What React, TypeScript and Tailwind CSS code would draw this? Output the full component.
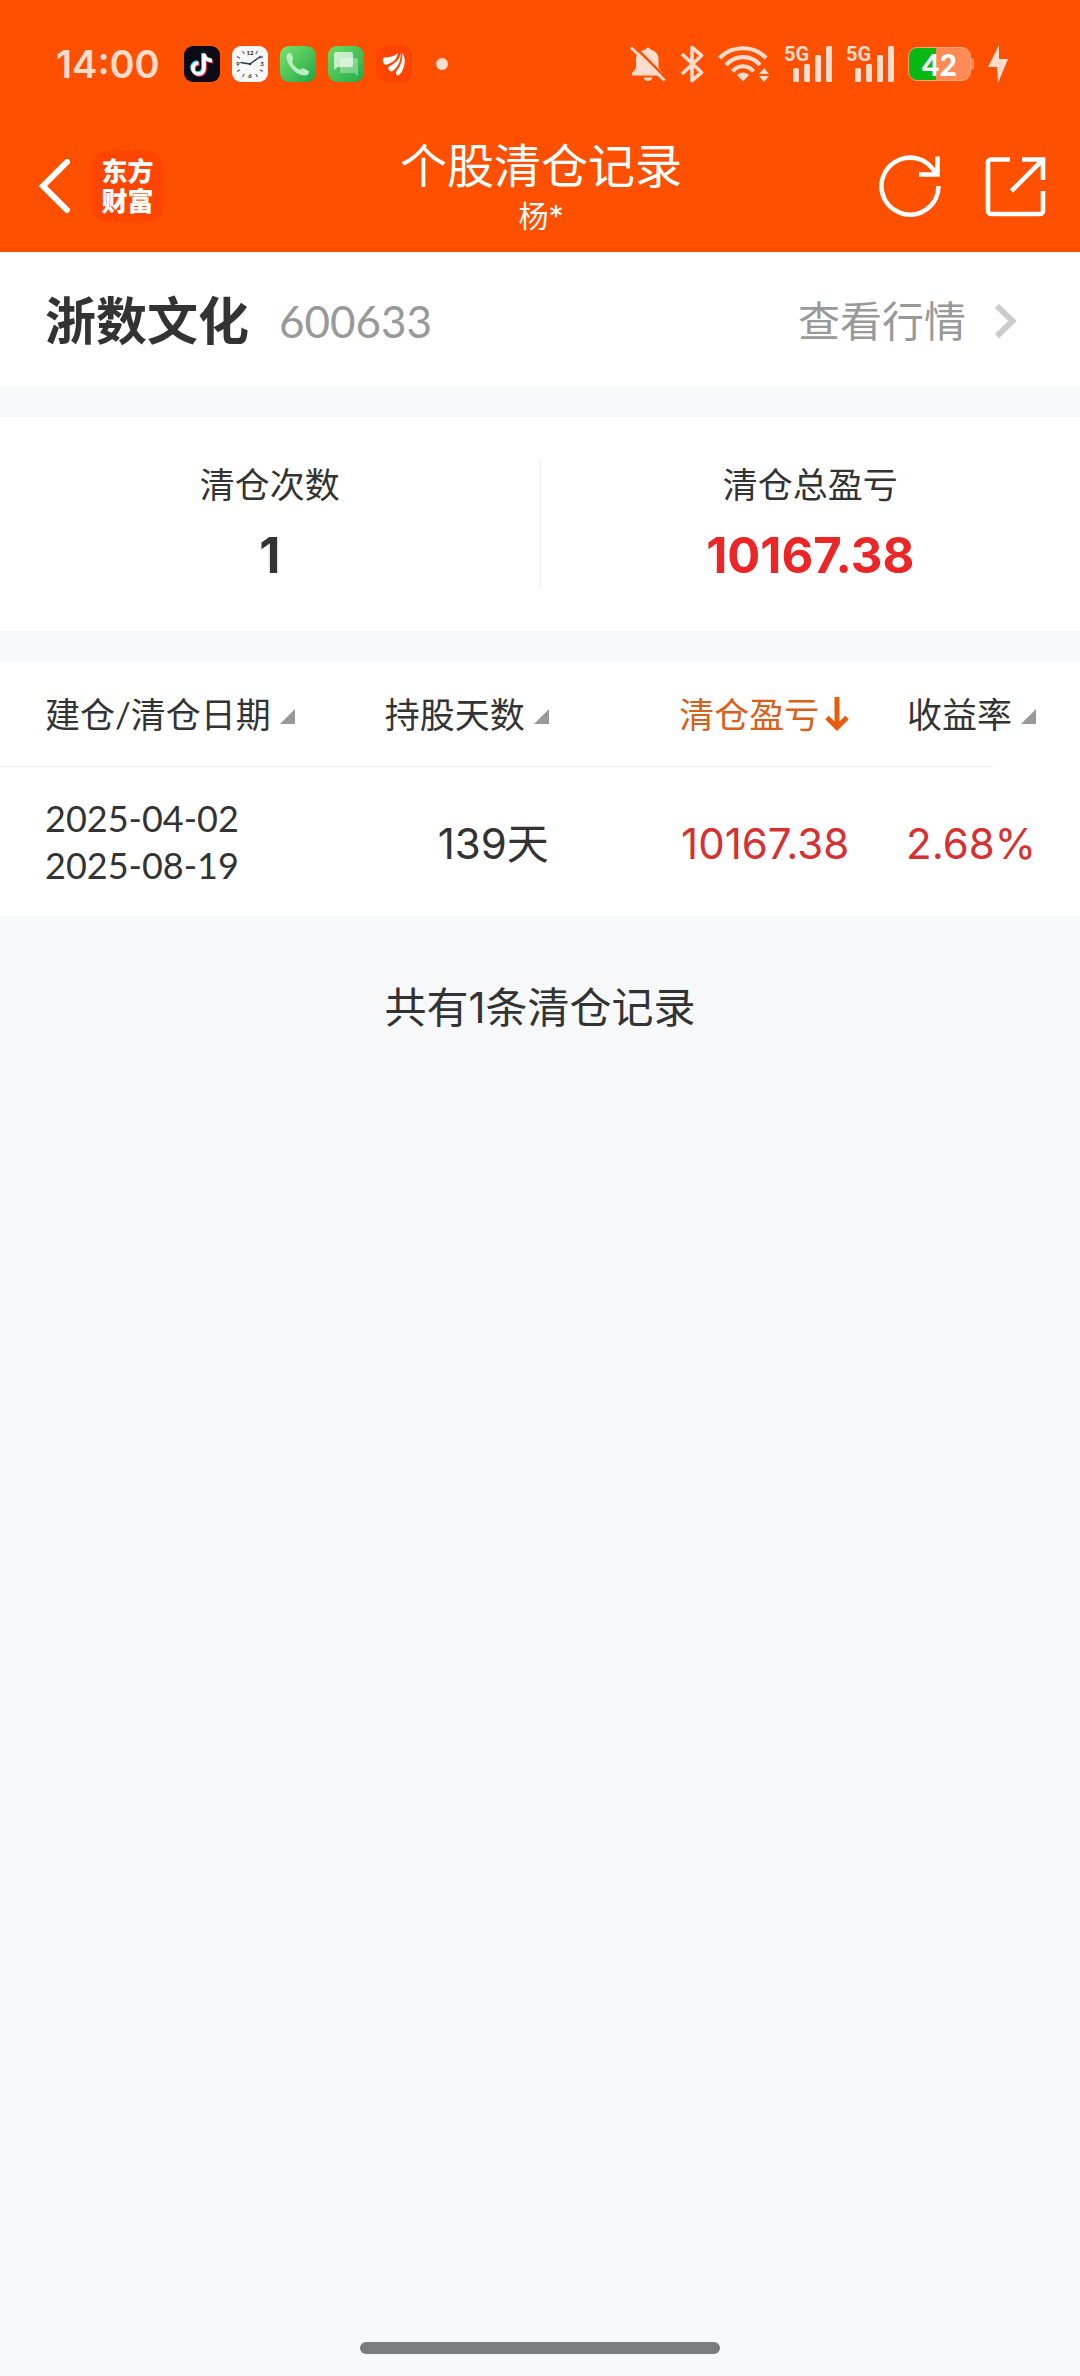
import React, { useState } from 'react';

// ============================================================
// Types and data
// ============================================================

type SortKey = 'date' | 'days' | 'profit' | 'rate';

interface ClearRecord {
  openDate: string;
  closeDate: string;
  days: number;
  profit: string;
  rate: string;
}

const records: ClearRecord[] = [
  { openDate: '2025-04-02', closeDate: '2025-08-19', days: 139, profit: '10167.38', rate: '2.68%' },
];

const columns: { key: SortKey; label: string; className: string }[] = [
  { key: 'date', label: '建仓/清仓日期', className: 'w-[31%] pl-[45px] text-left' },
  { key: 'days', label: '持股天数', className: 'w-[20%] pr-[2px] text-right' },
  { key: 'profit', label: '清仓盈亏', className: 'w-[28%] pr-1 text-right' },
  { key: 'rate', label: '收益率', className: 'w-[21%] pr-11 text-right' },
];

// ============================================================
// Status bar
// ============================================================

function TikTokIcon() {
  const note = 'M19 8v14.500a5.500 5.500 0 1 1-5.500-5.500M19 8c.6 4.200 3.300 6.400 8 6.600';
  return (
    <svg className="size-9" viewBox="0 0 36 36" fill="none" strokeWidth="3.6">
      <rect width="36" height="36" rx="9" fill="#0b0b17" />
      <path d={note} stroke="#25e6e0" transform="translate(0 -1)" />
      <path d={note} stroke="#f5325b" transform="translate(2 1)" />
      <path d={note} stroke="#fff" transform="translate(1 0)" />
    </svg>
  );
}

function ClockIcon() {
  const ticks = [30, 60, 120, 150, 210, 240, 300, 330];
  return (
    <svg className="size-9" viewBox="0 0 36 36">
      <rect width="36" height="36" rx="9" fill="#f8f8f8" />
      {ticks.map((deg) => (
        <path key={deg} d="M18 3v3.500" stroke="#555" transform={`rotate(${deg} 18 18)`} />
      ))}
      <g fill="#222" fontSize="6" fontWeight="700" textAnchor="middle" fontFamily="Lato, sans-serif">
        <text x="18" y="9">12</text>
        <text x="30" y="20">3</text>
        <text x="18" y="32">6</text>
        <text x="6" y="20">9</text>
      </g>
      <path d="M18 18 8.500 16.500" stroke="#24385c" strokeWidth="1.600" />
      <path d="m18 18 11-8" stroke="#24385c" strokeWidth="1.400" />
      <circle cx="18" cy="18" r="1.300" fill="#24385c" />
    </svg>
  );
}

function PhoneIcon() {
  return (
    <svg className="size-9" viewBox="0 0 36 36">
      <defs>
        <linearGradient id="phoneBg" x1="0" y1="0" x2="1" y2="1">
          <stop offset="0" stopColor="#7be36c" />
          <stop offset="1" stopColor="#1fa548" />
        </linearGradient>
      </defs>
      <rect width="36" height="36" rx="9" fill="url(#phoneBg)" />
      <path
        d="M7 8.500c1-1.500 3.500-2 4.500-.5l1.500 4c.4 1.300-.3 2.300-1 3 .8 4 4.500 7.700 8.500 8.700.8-.8 1.800-1.700 3-1.200l4.700 2c1.300.8 1 3.300-.5 4.300-3.500 1.500-9.500.2-14-4.300S5 12.500 7 8.500Z"
        fill="#b9efbd"
      />
    </svg>
  );
}

function MessageIcon() {
  return (
    <svg className="size-9" viewBox="0 0 36 36">
      <defs>
        <linearGradient id="messageBg" x1="0" y1="0" x2="1" y2="1">
          <stop offset="0" stopColor="#6fdc62" />
          <stop offset="1" stopColor="#22a94b" />
        </linearGradient>
      </defs>
      <rect width="36" height="36" rx="9" fill="url(#messageBg)" />
      <path d="M8 6h15a2 2 0 0 1 2 2v11a2 2 0 0 1-2 2H10l-4 3V8a2 2 0 0 1 2-2Z" fill="#fff" fillOpacity=".68" />
      <path d="M14 12h14a2 2 0 0 1 2 2v16l-4-3H14a2 2 0 0 1-2-2V14a2 2 0 0 1 2-2Z" fill="#fff" fillOpacity=".34" />
    </svg>
  );
}

function BrokerIcon() {
  return (
    <svg className="size-9" viewBox="0 0 36 36">
      <rect width="36" height="36" rx="9" fill="#ff4300" />
      <g fill="#fff">
        <path d="M22 6.500c-2 3.500-8 5-14 5-2 1-1.500 6 1.500 7.500C16 17.500 21.500 13 22 6.500Z" />
        <path d="M24.500 6.500c-.5 7-5 10.500-12 14.500-.8 2 1 4.500 3.500 4.500 6-4 9.500-11 8.500-19Z" />
        <path d="M26.300 7c2.200 3 3.200 8 1.700 13s-3.500 9-6.500 9.500c-1.700-.5-2-2.500-1-4.500 4-5 6-10 5.800-18Z" />
      </g>
    </svg>
  );
}

function BellOffIcon() {
  return (
    <svg className="h-9 w-9" viewBox="0 0 36 36">
      <path
        d="M18 1.500c1.300 0 2.200 1 2.200 2 4.800 1 8.300 4.500 8.300 9.500v7.500c0 2.500 2 4 4.500 6.500v2.500H2V27c2.500-2.500 4-4 4-6.500V13c0-5 4-8.500 9.800-9.500 0-1 .9-2 2.200-2Z"
        fill="#ffdccc"
      />
      <path d="M13.500 31.500h9c-1 2.300-2.300 3.500-4.500 3.500s-3.500-1.200-4.500-3.500Z" fill="#ffdccc" />
      <path d="m3-1 34 34" stroke="#ff5000" strokeWidth="2.600" />
      <path d="m1 1.500 33.500 33" stroke="#ffdccc" strokeWidth="3" />
    </svg>
  );
}

function BluetoothIcon() {
  return (
    <svg className="h-[38px] w-6" viewBox="0 0 24 38" fill="none" stroke="#ffdccc" strokeWidth="3.600">
      <path d="m2 9 19.500 18.500L12 35.500v-33l9.500 8L2 29" strokeLinejoin="round" />
    </svg>
  );
}

function WifiIcon() {
  return (
    <svg className="h-9 w-[52px]" viewBox="0 0 52 36" fill="none" stroke="#ffdccc" strokeWidth="4.200">
      <path d="M1.500 12C14-1 36-1 48 12" />
      <path d="M8 19c9-10.500 25.500-10.500 34 0" />
      <path d="M14.500 25.500c5.500-7 15.500-7 21 0" />
      <path d="M19 29c3.500-3.500 8.500-3.500 12 0l-6 6.500Z" fill="#ffdccc" stroke="none" />
      <path d="m46 22 5 6H41Zm0 14 5-6H41Z" fill="#ffdccc" stroke="none" />
    </svg>
  );
}

function SignalIcon() {
  return (
    <div className="relative h-9 w-12">
      <svg className="h-9 w-12" viewBox="0 0 48 36" fill="#ffdccc">
        <rect x="9" y="22" width="6" height="14" rx="1.500" />
        <rect x="20" y="18" width="6" height="18" rx="1.500" />
        <rect x="31" y="9" width="6" height="27" rx="1.500" />
        <rect x="42" y="0" width="6" height="36" rx="1.500" />
      </svg>
      <span className="absolute -top-[2px] left-0 font-['Roboto',sans-serif] text-[20px] leading-[20px] font-bold">5G</span>
    </div>
  );
}

function Battery() {
  return (
    <div className="flex items-center">
      <div className="flex h-[34px] w-[63px] items-center justify-center rounded-[9px] border border-[#ffa07a] bg-linear-to-r from-[#08b914] from-45% to-[#ff8a57] to-45% text-[30px] leading-[32px] font-black text-white">
        42
      </div>
      <div className="h-3 w-[3px] rounded-r-sm bg-[#ff8a57]" />
    </div>
  );
}

function StatusBar() {
  return (
    <div className="flex h-32 items-center justify-between pr-[72px] pl-14 text-[#ffdccc]">
      <div className="flex items-center gap-3">
        <span className="mr-3 font-['Inter',sans-serif] text-[38px] leading-[48px] font-semibold">14:00</span>
        <TikTokIcon />
        <ClockIcon />
        <PhoneIcon />
        <MessageIcon />
        <BrokerIcon />
        <span className="ml-3 size-3 rounded-full bg-[#ffdccc]" />
      </div>
      <div className="flex items-center gap-[14px]">
        <BellOffIcon />
        <BluetoothIcon />
        <WifiIcon />
        <SignalIcon />
        <SignalIcon />
        <Battery />
        <svg className="h-[38px] w-5" viewBox="0 0 20 38" fill="#ffdccc">
          <path d="M11 0 0 22h9l1 16 10-24h-9Z" />
        </svg>
      </div>
    </div>
  );
}

// ============================================================
// Navigation header
// ============================================================

function NavBar() {
  return (
    <div className="grid h-[124px] grid-cols-[1fr_auto_1fr] items-center pr-[34px] pb-2 pl-9 text-white">
      <div className="flex items-center gap-[22px]">
        <button type="button" aria-label="返回">
          <svg className="h-[54px] w-[34px]" viewBox="0 0 34 54" fill="none" stroke="currentColor" strokeWidth="6">
            <path d="M31 3 7 27l24 24" strokeLinecap="round" />
          </svg>
        </button>
        <div className="flex size-[71px] flex-col items-center justify-center rounded-[15px] bg-[#ff4500] text-[26px] leading-[30px] font-black">
          <span>东方</span>
          <span>财富</span>
        </div>
      </div>
      <div className="flex flex-col items-center">
        <h1 className="text-[47px] leading-[60px]">个股清仓记录</h1>
        <p className="font-['Inter','Noto_Sans_CJK_SC',sans-serif] text-[30px] leading-[42px]">杨*</p>
      </div>
      <div className="flex items-center justify-end gap-[44px]">
        <button type="button" aria-label="刷新">
          <svg className="size-[62px]" viewBox="0 0 62 62" fill="none" stroke="currentColor" strokeWidth="4.600">
            <path d="M59.500 31A28.500 28.500 0 1 1 57 19.500" />
            <path d="M58.500 1.500v18H40" />
          </svg>
        </button>
        <button type="button" aria-label="分享">
          <svg className="size-[61px]" viewBox="0 0 61 61" fill="none" stroke="currentColor" strokeWidth="4.600">
            <path d="M25 3.500H6a3 3 0 0 0-3 3V55a3 3 0 0 0 3 3h49a3 3 0 0 0 3-3V35" />
            <path d="M37 3.500h21V24M57 4.500 26.500 35" />
          </svg>
        </button>
      </div>
    </div>
  );
}

// ============================================================
// Content sections
// ============================================================

function StockRow() {
  return (
    <section className="flex h-[135px] items-center justify-between bg-white pt-[2px] pr-[63px] pl-[45px]">
      <div className="flex items-center gap-[30px]">
        <h2 className="text-[51px] leading-[60px] font-bold">浙数文化</h2>
        <span className="text-[44px] leading-[60px] text-[#999]">600633</span>
      </div>
      <a href="#quote" className="flex items-center gap-[29px] text-[42px] leading-[60px] text-[#999]">
        查看行情
        <svg className="h-[34px] w-[22px]" viewBox="0 0 22 34" fill="none" stroke="#ccc" strokeWidth="6">
          <path d="m2 2 15.500 15L2 32" />
        </svg>
      </a>
    </section>
  );
}

function Summary() {
  return (
    <section className="flex bg-white py-[43px] text-center">
      <div className="h-32 flex-1 border-r border-[#ededed]">
        <p className="text-[35px] leading-[48px]">清仓次数</p>
        <p className="pt-[18px] font-['Inter',sans-serif] text-[49px] leading-[60px] font-bold">1</p>
      </div>
      <div className="h-32 flex-1">
        <p className="text-[35px] leading-[48px]">清仓总盈亏</p>
        <p className="pt-[18px] font-['Inter',sans-serif] text-[49px] leading-[60px] font-bold text-[#ec2526]">10167.38</p>
      </div>
    </section>
  );
}

function SortMark({ active }: { active: boolean }) {
  if (active) {
    return (
      <svg className="h-[34px] w-6" viewBox="0 0 24 34" fill="none" stroke="#e85a0c" strokeWidth="5">
        <path d="M12 0v30" />
        <path d="m2 20.500 10 10 10-10" />
      </svg>
    );
  }
  return (
    <svg className="mt-[5px] h-[15px] w-[15px]" viewBox="0 0 15 15" fill="#999">
      <path d="M15 0v15H0Z" />
    </svg>
  );
}

function RecordTable() {
  const [sortKey, setSortKey] = useState<SortKey>('profit');

  return (
    <table className="w-full table-fixed border-collapse bg-white">
      <thead className="bg-[linear-gradient(#ededed,#ededed)] bg-[length:92%_1px] bg-left-bottom bg-no-repeat">
        <tr className="h-[106px]">
          {columns.map((col) => {
            const active = col.key === sortKey;
            return (
              <th key={col.key} className={`font-normal ${col.className}`}>
                <button
                  type="button"
                  onClick={() => setSortKey(col.key)}
                  className={`inline-flex items-center text-[35px] leading-[48px] whitespace-nowrap ${
                    active ? 'gap-[6px] text-[#d9601a]' : 'gap-[9px]'
                  }`}
                >
                  {col.label}
                  <SortMark active={active} />
                </button>
              </th>
            );
          })}
        </tr>
      </thead>
      <tbody>
        {records.map((row) => (
          <tr
            key={row.openDate}
            className="h-[149px] text-right font-['Inter','Noto_Sans_CJK_SC',sans-serif] text-[42px]"
          >
            <td className="pl-[45px] text-left font-['Lato',sans-serif] text-[36px] leading-[47px]">
              {row.openDate}
              <br />
              {row.closeDate}
            </td>
            <td className="pt-1 pr-[2px]">{row.days}天</td>
            <td className="pt-1 pr-1 text-[#d63031]">{row.profit}</td>
            <td className="pt-1 pr-11 text-[#d63031]">{row.rate}</td>
          </tr>
        ))}
      </tbody>
    </table>
  );
}

export default function App() {
  return (
    <div className="flex min-h-screen flex-col bg-[#f6f8fa] font-['Lato','Noto_Sans_CJK_SC',sans-serif] text-[#333]">
      <header className="bg-[#ff5000]">
        <StatusBar />
        <NavBar />
      </header>
      <main className="flex flex-col gap-[30px]">
        <StockRow />
        <Summary />
        <RecordTable />
        <p className="pt-8 text-center font-['Inter','Noto_Sans_CJK_SC',sans-serif] text-[42px] leading-[60px]">
          共有{records.length}条清仓记录
        </p>
      </main>
      <div className="mt-auto flex justify-center pb-[22px]">
        <div className="h-3 w-1/3 rounded-full bg-[#7b7c7e]" />
      </div>
    </div>
  );
}
